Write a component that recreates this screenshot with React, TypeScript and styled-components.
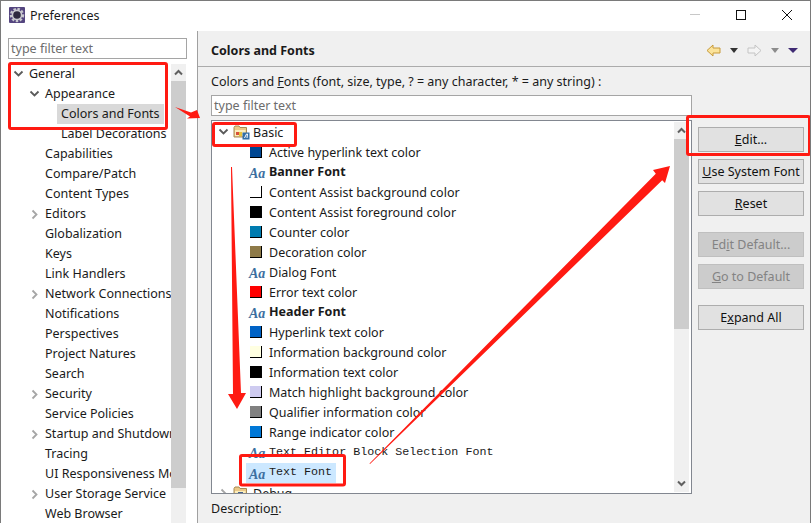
import React from 'react';
import styled, {createGlobalStyle} from 'styled-components';

const GlobalStyle = createGlobalStyle`
    html, body {
        margin: 0;
        padding: 0;
        background: #f0f0f0;
    }
    body {
        font-family: "Noto Sans", "Open Sans", sans-serif;
        font-size: 12.5px;
        color: #1a1a1a;
    }
`;

const Window = styled.div`
    position: relative;
    width: 811px;
    height: 523px;
    box-sizing: border-box;
    border: 1px solid #7a7a7a;
    border-bottom: 0;
    display: flex;
    flex-direction: column;
    overflow: hidden;
`;

const TitleBar = styled.div`
    height: 30px;
    box-sizing: border-box;
    flex: none;
    background: #fff;
    display: flex;
    align-items: center;
    padding: 0 0 2px 8px;
`;

const TitleText = styled.span`
    flex: 1;
    margin-left: 5px;
    font-size: 12.5px;
`;

const WindowButton = styled.span`
    width: 46px;
    height: 28px;
    display: flex;
    align-items: center;
    justify-content: center;
`;

const Body = styled.div`
    flex: 1;
    min-height: 0;
    display: flex;
`;

const LeftPanel = styled.div`
    width: 179px;
    flex: none;
    background: #fff;
    border-right: 1px solid #a0a0a0;
    padding: 7px 10px 0 7px;
    display: flex;
    flex-direction: column;
`;

const FilterInput = styled.div`
    height: 19px;
    box-sizing: border-box;
    height: 21px;
    border: 1px solid #a5a5a5;
    background: #fff;
    color: #6d6d6d;
    line-height: 19px;
    padding-left: 2px;
    flex: none;
`;

const LeftTreeWrap = styled.div`
    flex: 1;
    min-height: 0;
    margin-top: 5px;
    display: flex;
    overflow: hidden;
`;

const LeftTree = styled.div`
    width: 163px;
    flex: none;
    overflow: hidden;
`;

const Row = styled.div<{$indent: number}>`
    height: 20px;
    display: flex;
    align-items: center;
    white-space: nowrap;
    padding-left: ${p => p.$indent}px;
`;

const ChevronSlot = styled.span`
    width: 11px;
    flex: none;
    display: flex;
    align-items: center;
    justify-content: center;
    margin-right: 5px;
`;

const RowLabel = styled.span<{$selected?: boolean}>`
    line-height: 20px;
    padding: 0 4px;
    margin-left: -4px;
    background: ${p => (p.$selected ? '#d9d9d9' : 'transparent')};
`;

const Scrollbar = styled.div`
    width: 15px;
    flex: none;
    background: #f0f0f0;
    display: flex;
    flex-direction: column;
    align-items: stretch;
`;

const ListScrollbar = styled(Scrollbar)`
    margin: 1px 2px 1px 0;
`;

const ScrollArrow = styled.div`
    height: 17px;
    flex: none;
    display: flex;
    align-items: center;
    justify-content: center;
    background: #f0f0f0;
`;

const ScrollThumb = styled.div<{$height: number}>`
    height: ${p => p.$height}px;
    flex: none;
    background: #cdcdcd;
`;

const ScrollSpacer = styled.div`
    flex: 1;
`;

const RightPanel = styled.div`
    flex: 1;
    min-width: 0;
    background: #f0f0f0;
    display: flex;
    flex-direction: column;
`;

const PageHeader = styled.div`
    height: 36px;
    flex: none;
    box-sizing: border-box;
    border-bottom: 1px solid #ababab;
    display: flex;
    align-items: center;
    padding: 4px 12px 0 13px;
`;

const PageTitle = styled.span`
    flex: 1;
    font-weight: 700;
    font-size: 12.5px;
`;

const HeaderIcons = styled.span`
    display: flex;
    align-items: center;
    gap: 9px;
`;

const PageBody = styled.div`
    flex: 1;
    min-height: 0;
    display: flex;
    padding: 0 6px 0 13px;
    gap: 6px;
`;

const MainColumn = styled.div`
    width: 481px;
    flex: none;
    display: flex;
    flex-direction: column;
`;

const Caption = styled.div`
    height: 28px;
    line-height: 30px;
    flex: none;
    white-space: nowrap;
`;

const ListBox = styled.div`
    height: 372px;
    flex: none;
    margin-top: 4px;
    border: 1px solid #828790;
    background: #fff;
    display: flex;
    overflow: hidden;
`;

const ListRows = styled.div`
    flex: 1;
    min-width: 0;
    overflow: hidden;
    padding-top: 1px;
`;

const Swatch = styled.span<{$color: string}>`
    width: 11px;
    height: 11px;
    flex: none;
    background: ${p => p.$color};
    border-right: 1px solid #000;
    border-bottom: 1px solid #000;
    margin-right: 7px;
`;

const FontGlyph = styled.span`
    width: 13px;
    flex: none;
    margin: 0 6px 0 -1px;
    padding-right: 1px;
    font-family: "Liberation Serif", serif;
    font-style: italic;
    font-weight: 700;
    font-size: 14px;
    color: #3c6f9f;
    position: relative;
    top: 2px;
    white-space: nowrap;
`;

const EntryText = styled.span<{$bold?: boolean; $mono?: boolean; $selected?: boolean}>`
    font-weight: ${p => (p.$bold ? 700 : 400)};
    font-family: ${p => (p.$mono ? '"Liberation Mono", monospace' : 'inherit')};
    font-size: ${p => (p.$mono ? '11.7px' : 'inherit')};
    position: relative;
    top: ${p => (p.$bold || p.$selected ? -1 : 0)}px;
`;

const EntryRow = styled.div<{$selected?: boolean}>`
    height: 20px;
    display: flex;
    align-items: center;
    white-space: nowrap;
    padding-left: 38px;
    margin-top: ${p => (p.$selected ? 1 : 0)}px;
    background: ${p => (p.$selected ? 'linear-gradient(#cce8ff, #cce8ff) 34px 0 / 90px 20px no-repeat' : 'none')};
`;

const GroupRow = styled.div`
    height: 20px;
    display: flex;
    align-items: center;
    padding-left: 6px;
    white-space: nowrap;
`;

const GroupChevron = styled(ChevronSlot)`
    margin-right: 4px;
`;

const FolderSlot = styled.span`
    display: flex;
    margin-right: 3px;
`;

const ButtonColumn = styled.div`
    width: 106px;
    flex: none;
    padding-top: 60px;
    display: flex;
    flex-direction: column;
`;

const Button = styled.div<{$disabled?: boolean; $gap?: number}>`
    height: 23px;
    flex: none;
    border: 1px solid ${p => (p.$disabled ? '#bfbfbf' : '#adadad')};
    background: ${p => (p.$disabled ? '#ccc' : '#e1e1e1')};
    color: ${p => (p.$disabled ? '#838383' : '#111')};
    margin-top: ${p => p.$gap ?? 7}px;
    display: flex;
    align-items: center;
    justify-content: center;
    white-space: nowrap;
`;

const Footer = styled.div`
    height: 27px;
    line-height: 29px;
    flex: none;
`;

const Annotations = styled.svg`
    position: absolute;
    left: -1px;
    top: -1px;
    pointer-events: none;
`;

const chevronDown = (
    <svg
        width='11'
        height='8'
        viewBox='0 0 11 8'
    >
        <path
            d='M1.5 1.5L5.5 5.5L9.5 1.5'
            fill='none'
            stroke='#5a5a5a'
            strokeWidth='1.8'
        />
    </svg>
);

const chevronRight = (
    <svg
        width='8'
        height='11'
        viewBox='0 0 8 11'
    >
        <path
            d='M1.5 1.5L5.5 5.5L1.5 9.5'
            fill='none'
            stroke='#a6a6a6'
            strokeWidth='1.8'
        />
    </svg>
);

const scrollUp = (
    <svg
        width='9'
        height='7'
        viewBox='0 0 9 7'
    >
        <path
            d='M1 5.5L4.5 2L8 5.5'
            fill='none'
            stroke='#606060'
            strokeWidth='2'
        />
    </svg>
);

const scrollDown = (
    <svg
        width='9'
        height='7'
        viewBox='0 0 9 7'
    >
        <path
            d='M1 1.5L4.5 5L8 1.5'
            fill='none'
            stroke='#606060'
            strokeWidth='2'
        />
    </svg>
);

function AppIcon() {
    return (
        <svg
            width='16'
            height='16'
            viewBox='0 0 16 16'
        >
            <rect
                width='16'
                height='16'
                rx='1'
                fill='#54457f'
            />
            <circle
                cx='8'
                cy='8'
                r='6'
                fill='none'
                stroke='#c9c9cf'
                strokeWidth='2.4'
                strokeDasharray='2.4 1.6'
            />
            <circle
                cx='8'
                cy='8'
                r='5.4'
                fill='#c9c9cf'
            />
            <circle
                cx='8'
                cy='8'
                r='3.8'
                fill='#2f2a40'
            />
        </svg>
    );
}

function FolderIcon({badge}: {badge?: boolean}) {
    return (
        <svg
            width='17'
            height='16'
            viewBox='0 0 17 16'
        >
            <path
                d='M1 3.5L2 2h4l1 1.5h6.5V13H1z'
                fill='#ecc987'
                stroke='#a58a55'
            />
            <rect
                x='2'
                y='6'
                width='10.5'
                height='6'
                fill='#fbeebc'
            />
            {badge ? (
                <>
                    <rect
                        x='3'
                        y='8'
                        width='3'
                        height='3'
                        fill='#d8503a'
                    />
                    <rect
                        x='6'
                        y='8'
                        width='3'
                        height='4'
                        fill='#e6c23a'
                    />
                    <rect
                        x='9.5'
                        y='8.5'
                        width='7'
                        height='7'
                        fill='#2f6ea8'
                    />
                    <path
                        d='M11.5 14l2-4h1l-.5 4'
                        fill='none'
                        stroke='#fff'
                        strokeWidth='1'
                    />
                </>
            ) : (
                <rect
                    x='5'
                    y='7'
                    width='5'
                    height='4'
                    fill='#47628f'
                />
            )}
        </svg>
    );
}

function NavArrow({dir, fill, stroke}: {dir: 'back' | 'forward'; fill: string; stroke: string}) {
    const d = dir === 'back' ? 'M1 6.5L7 1v3h7v5H7v3z' : 'M14 6.5L8 1v3H1v5h7v3z';
    return (
        <svg
            width='15'
            height='13'
            viewBox='0 0 15 13'
        >
            <path
                d={d}
                fill={fill}
                stroke={stroke}
            />
        </svg>
    );
}

function Caret({color, wide}: {color: string; wide?: boolean}) {
    return (
        <svg
            width={wide ? 10 : 8}
            height='5'
            viewBox={wide ? '0 0 10 5' : '0 0 8 5'}
        >
            <path
                d={wide ? 'M0 0h10L5 5z' : 'M0 0h8L4 5z'}
                fill={color}
            />
        </svg>
    );
}

const leftItems: Array<{label: string; indent: number; chevron?: 'down' | 'right'; selected?: boolean}> = [
    {label: 'General', indent: 5, chevron: 'down'},
    {label: 'Appearance', indent: 21, chevron: 'down'},
    {label: 'Colors and Fonts', indent: 37, selected: true},
    {label: 'Label Decorations', indent: 37},
    {label: 'Capabilities', indent: 21},
    {label: 'Compare/Patch', indent: 21},
    {label: 'Content Types', indent: 21},
    {label: 'Editors', indent: 21, chevron: 'right'},
    {label: 'Globalization', indent: 21},
    {label: 'Keys', indent: 21},
    {label: 'Link Handlers', indent: 21},
    {label: 'Network Connections', indent: 21, chevron: 'right'},
    {label: 'Notifications', indent: 21},
    {label: 'Perspectives', indent: 21},
    {label: 'Project Natures', indent: 21},
    {label: 'Search', indent: 21},
    {label: 'Security', indent: 21, chevron: 'right'},
    {label: 'Service Policies', indent: 21},
    {label: 'Startup and Shutdown', indent: 21, chevron: 'right'},
    {label: 'Tracing', indent: 21},
    {label: 'UI Responsiveness Monitoring', indent: 21},
    {label: 'User Storage Service', indent: 21, chevron: 'right'},
    {label: 'Web Browser', indent: 21},
];

const entries: Array<{label: string; color?: string; bold?: boolean; mono?: boolean; selected?: boolean}> = [
    {label: 'Active hyperlink text color', color: '#004792'},
    {label: 'Banner Font', bold: true},
    {label: 'Content Assist background color', color: '#fff'},
    {label: 'Content Assist foreground color', color: '#000'},
    {label: 'Counter color', color: '#007cb0'},
    {label: 'Decoration color', color: '#8e7a48'},
    {label: 'Dialog Font'},
    {label: 'Error text color', color: '#ff0000'},
    {label: 'Header Font', bold: true},
    {label: 'Hyperlink text color', color: '#0063c6'},
    {label: 'Information background color', color: '#ffffe1'},
    {label: 'Information text color', color: '#000'},
    {label: 'Match highlight background color', color: '#cecbf0'},
    {label: 'Qualifier information color', color: '#808080'},
    {label: 'Range indicator color', color: '#0078d7'},
    {label: 'Text Editor Block Selection Font', mono: true},
    {label: 'Text Font', mono: true, selected: true},
];

export default function App() {
    return (
        <>
            <GlobalStyle/>
            <Window>
                <TitleBar>
                    <AppIcon/>
                    <TitleText>{'Preferences'}</TitleText>
                    <WindowButton>
                        <svg
                            width='10'
                            height='2'
                        >
                            <rect
                                width='10'
                                height='1'
                                fill='#c8c8c8'
                            />
                        </svg>
                    </WindowButton>
                    <WindowButton>
                        <svg
                            width='10'
                            height='10'
                        >
                            <rect
                                x='.5'
                                y='.5'
                                width='9'
                                height='9'
                                fill='none'
                                stroke='#111'
                            />
                        </svg>
                    </WindowButton>
                    <WindowButton>
                        <svg
                            width='10'
                            height='10'
                        >
                            <path
                                d='M0 0L10 10M10 0L0 10'
                                stroke='#111'
                            />
                        </svg>
                    </WindowButton>
                </TitleBar>
                <Body>
                    <LeftPanel>
                        <FilterInput>{'type filter text'}</FilterInput>
                        <LeftTreeWrap>
                            <LeftTree>
                                {leftItems.map((item) => (
                                    <Row
                                        key={item.label}
                                        $indent={item.indent}
                                    >
                                        <ChevronSlot>
                                            {item.chevron === 'down' && chevronDown}
                                            {item.chevron === 'right' && chevronRight}
                                        </ChevronSlot>
                                        <RowLabel $selected={item.selected}>{item.label}</RowLabel>
                                    </Row>
                                ))}
                            </LeftTree>
                            <Scrollbar>
                                <ScrollArrow>{scrollUp}</ScrollArrow>
                                <ScrollThumb $height={407}/>
                            </Scrollbar>
                        </LeftTreeWrap>
                    </LeftPanel>
                    <RightPanel>
                        <PageHeader>
                            <PageTitle>{'Colors and Fonts'}</PageTitle>
                            <HeaderIcons>
                                <NavArrow
                                    dir='back'
                                    fill='#fbe39a'
                                    stroke='#c79a3a'
                                />
                                <Caret color='#333'/>
                                <NavArrow
                                    dir='forward'
                                    fill='#f4f4f4'
                                    stroke='#c4c4c4'
                                />
                                <Caret color='#8c8c8c'/>
                                <Caret
                                    color='#3f2a73'
                                    wide={true}
                                />
                            </HeaderIcons>
                        </PageHeader>
                        <PageBody>
                            <MainColumn>
                                <Caption>
                                    {'Colors and '}<u>{'F'}</u>{'onts (font, size, type, ? = any character, * = any string) :'}
                                </Caption>
                                <FilterInput>{'type filter text'}</FilterInput>
                                <ListBox>
                                    <ListRows>
                                        <GroupRow>
                                            <GroupChevron>{chevronDown}</GroupChevron>
                                            <FolderSlot><FolderIcon badge={true}/></FolderSlot>
                                            {'Basic'}
                                        </GroupRow>
                                        {entries.map((entry) => (
                                            <EntryRow
                                                key={entry.label}
                                                $selected={entry.selected}
                                            >
                                                {entry.color ? <Swatch $color={entry.color}/> : <FontGlyph>{'Aa'}</FontGlyph>}
                                                <EntryText
                                                    $bold={entry.bold}
                                                    $mono={entry.mono}
                                                    $selected={entry.selected}
                                                >
                                                    {entry.label}
                                                </EntryText>
                                            </EntryRow>
                                        ))}
                                        <GroupRow>
                                            <GroupChevron>{chevronRight}</GroupChevron>
                                            <FolderSlot><FolderIcon/></FolderSlot>
                                            {'Debug'}
                                        </GroupRow>
                                    </ListRows>
                                    <ListScrollbar>
                                        <ScrollArrow>{scrollUp}</ScrollArrow>
                                        <ScrollThumb $height={190}/>
                                        <ScrollSpacer/>
                                        <ScrollArrow>{scrollDown}</ScrollArrow>
                                    </ListScrollbar>
                                </ListBox>
                                <Footer>{'Descriptio'}<u>{'n'}</u>{':'}</Footer>
                            </MainColumn>
                            <ButtonColumn>
                                <Button $gap={0}><u>{'E'}</u>{'dit...'}</Button>
                                <Button><u>{'U'}</u>{'se System Font'}</Button>
                                <Button><u>{'R'}</u>{'eset'}</Button>
                                <Button
                                    $disabled={true}
                                    $gap={16}
                                >
                                    {'Ed'}<u>{'i'}</u>{'t Default...'}
                                </Button>
                                <Button $disabled={true}><u>{'G'}</u>{'o to Default'}</Button>
                                <Button $gap={16}>{'E'}<u>{'x'}</u>{'pand All'}</Button>
                            </ButtonColumn>
                        </PageBody>
                    </RightPanel>
                </Body>
                <Annotations
                    width='811'
                    height='523'
                    viewBox='0 0 811 523'
                >
                    <g
                        fill='none'
                        stroke='#ff1a12'
                        strokeWidth='3'
                    >
                        <rect
                            x='9.5'
                            y='63.5'
                            width='157'
                            height='65'
                            rx='1.5'
                        />
                        <rect
                            x='213.5'
                            y='123.5'
                            width='82'
                            height='22'
                            rx='1.5'
                        />
                        <rect
                            x='240.5'
                            y='455.5'
                            width='104'
                            height='29.5'
                            rx='1.5'
                        />
                        <rect
                            x='687.5'
                            y='116.5'
                            width='122'
                            height='38'
                            rx='1.5'
                        />
                    </g>
                    <g fill='#ff1a12'>
                        <path d='M175 107L191 112.5L197 110L200 118L187 118.5L190 116.5z'/>
                        <path d='M231 167L232 167L241 393L246 393L237 409L228 394L233 394z'/>
                        <path d='M370 464L369.5 463.5L655.8 173.8L653 170L670 166L665 183L662.2 180.2z'/>
                    </g>
                </Annotations>
            </Window>
        </>
    );
}
